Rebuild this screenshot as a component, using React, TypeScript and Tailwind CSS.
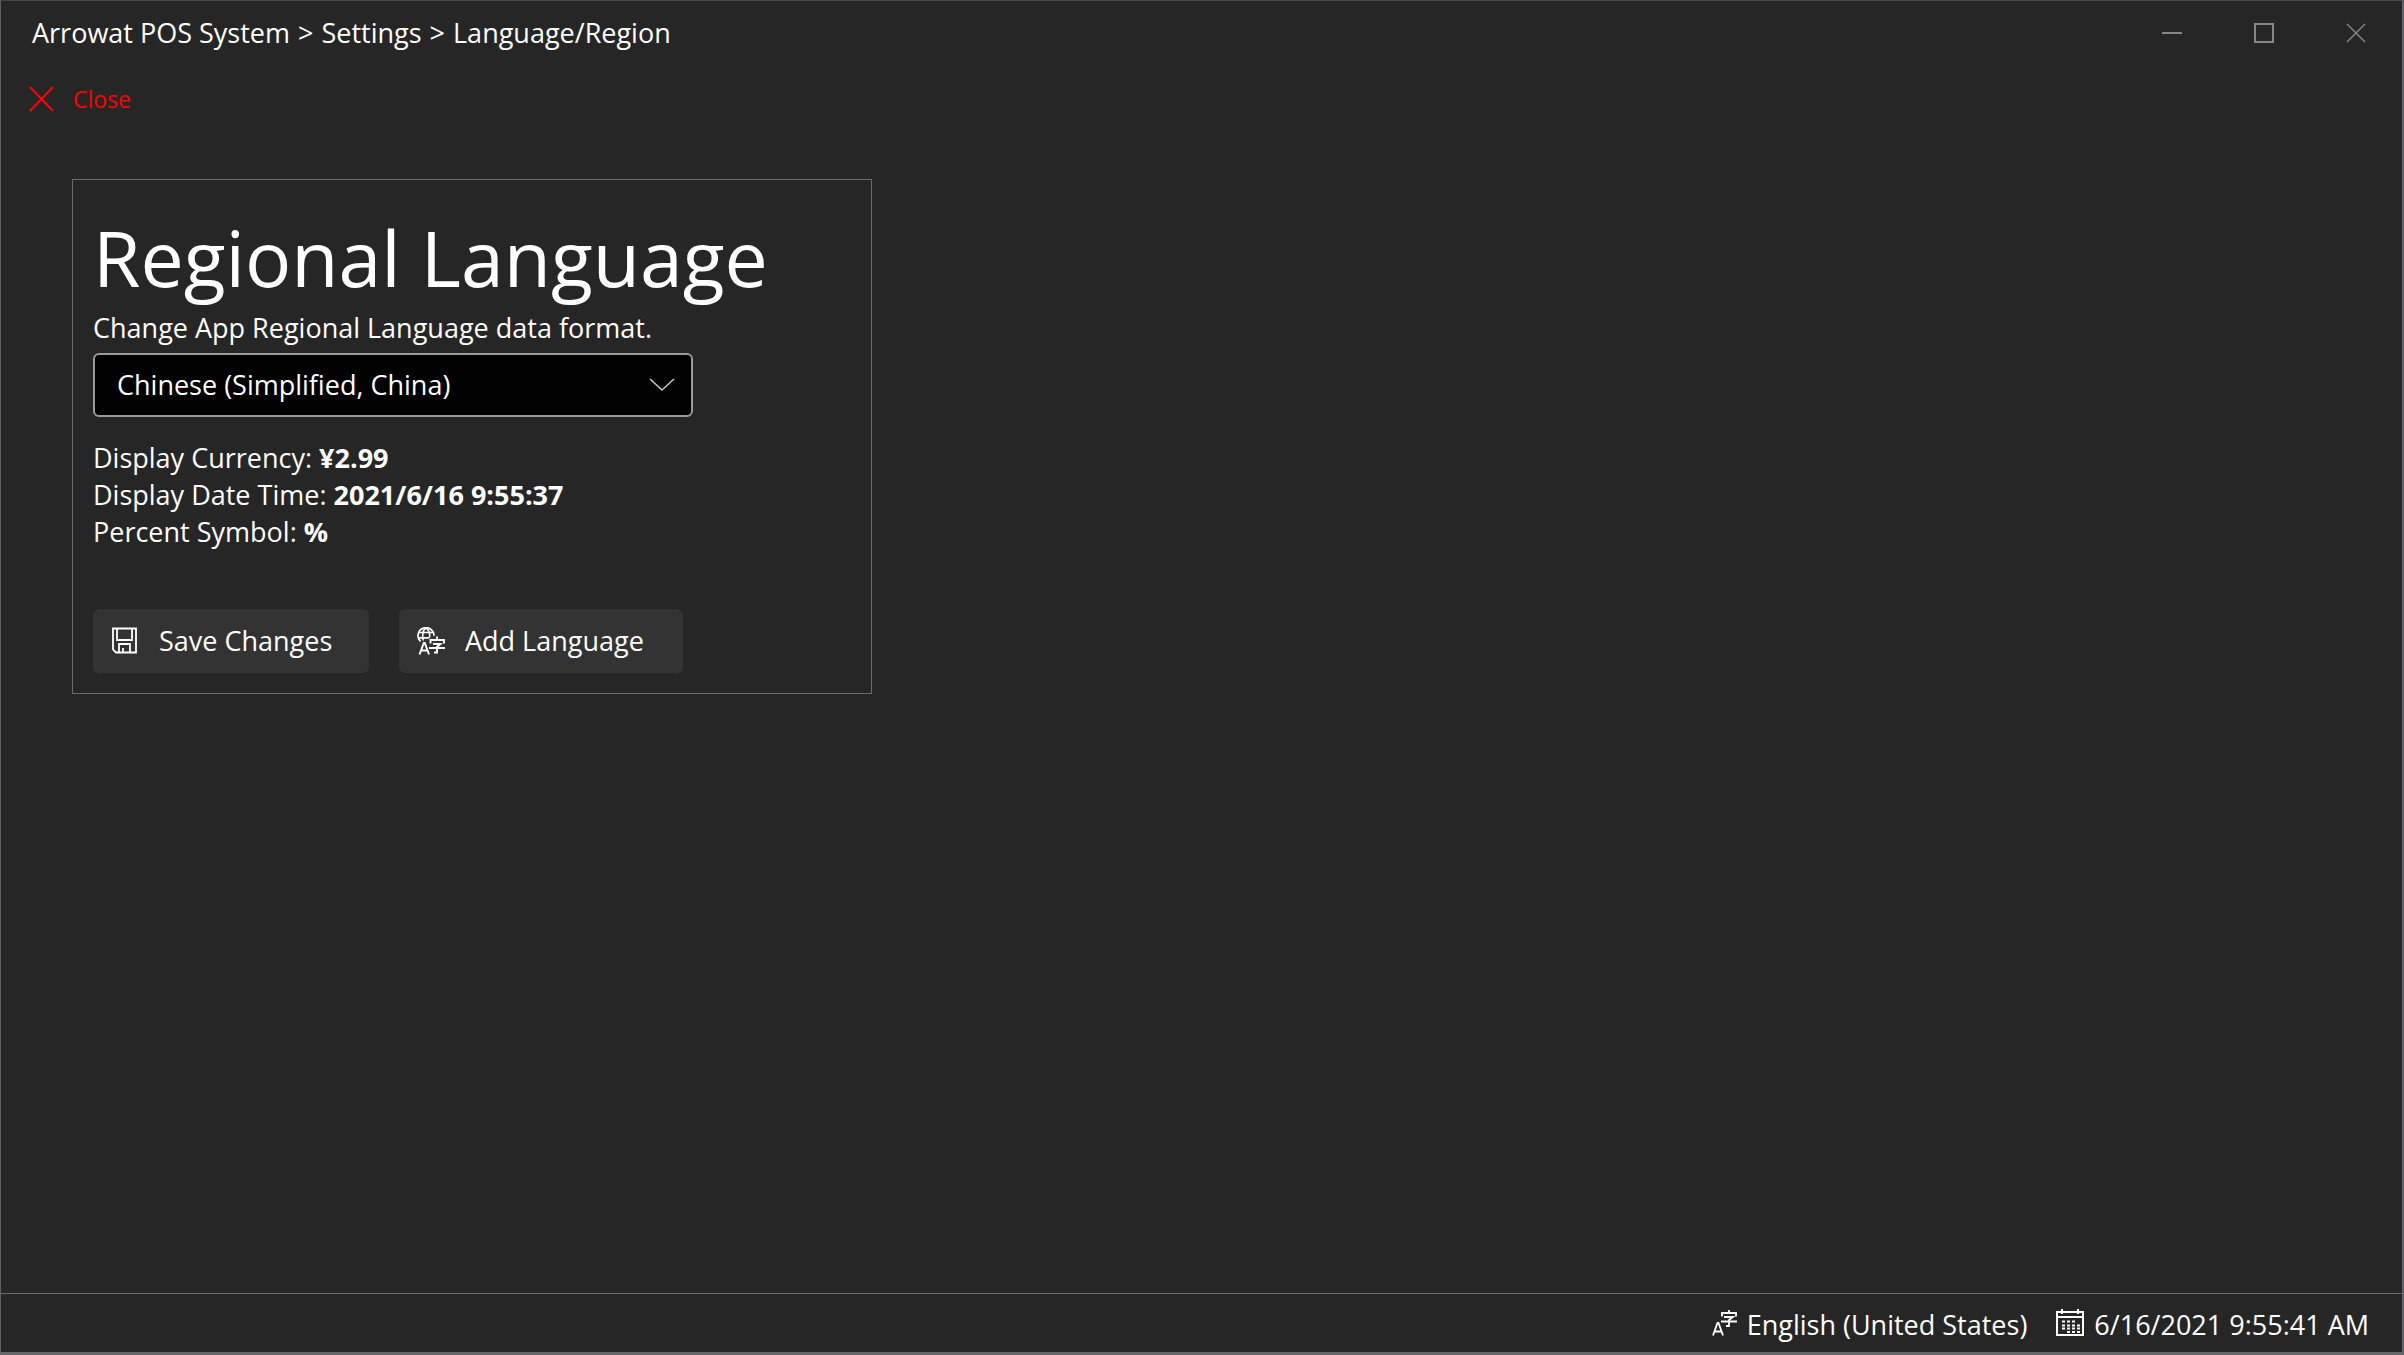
import type { ReactNode } from "react";

function Icon({ size, label, className, children }: { size: number; label?: string; className?: string; children: ReactNode }) {
  return (
    <svg
      width={size}
      height={size}
      viewBox={`0 0 ${size} ${size}`}
      fill="none"
      stroke="currentColor"
      strokeWidth={2}
      aria-hidden={label ? undefined : true}
      aria-label={label}
      className={`shrink-0 ${className ?? ""}`}
    >
      {children}
    </svg>
  );
}

function SaveIcon() {
  return (
    <Icon size={28}>
      <path d="M2 1.500h23v24H5l-3-3V1.500z" strokeWidth={1.800} />
      <path d="M6 2v11h15V2M8 25v-8h11v8M12 25v-4" strokeWidth={1.800} />
    </Icon>
  );
}

function AddLanguageIcon() {
  return (
    <Icon size={28}>
      <path d="M3.500 14.500A8 8 0 1 1 17 8.700M2 5.500h14M1.500 10.800h11" strokeWidth={1.700} />
      <path d="M6.300 13.500C5 9 5.500 3 9 1C12 3 13 7 12.600 10.500" strokeWidth={1.600} />
      <path d="M2.500 27.500L6.800 16h1L12 27.500M4 23.500h6.500" />
      <path d="M20 9.500v3.500M13.500 16.500v-3.500h13.500v3.500M16 17h7.500l-3.500 3v5.500h-3M12 21h16" strokeWidth={1.900} />
    </Icon>
  );
}

function LanguageIcon() {
  return (
    <Icon size={28}>
      <path d="M2 26.500L6.500 14h1L12 26.500M3.500 22.500h7" strokeWidth={1.800} />
      <path d="M18 1v3M11 7.500V4h14v3.500M13 8h9l-4 3V17h-3M10 12.500h16" strokeWidth={1.800} />
    </Icon>
  );
}

function CalendarIcon() {
  return (
    <Icon size={28}>
      <path d="M1 3h26v23H1zM1 8h26M6 0v5M22 0v5" />
      <path d="M6 12.500h3M11 12.500h3M16 12.500h3M6 16.500h3M11 16.500h3M16 16.500h3M21 16.500h3M6 19.500h3M11 19.500h3M16 19.500h3M21 19.500h3M11 23h3M16 23h3M21 23h3" strokeWidth={1.800} />
    </Icon>
  );
}

function WindowButton({ label, children }: { label: string; children: ReactNode }) {
  return (
    <button type="button" aria-label={label} className="flex w-[92px] items-center justify-center text-[#868686]">
      <Icon size={20}>{children}</Icon>
    </button>
  );
}

function ActionButton({ icon, children, className }: { icon: ReactNode; children: ReactNode; className: string }) {
  return (
    <button type="button" className={`flex h-16 items-center rounded-md bg-[#333333] pl-[18px] ${className}`}>
      {icon}
      <span className="ml-5">{children}</span>
    </button>
  );
}

export default function App() {
  return (
    <div className="flex min-h-screen flex-col border-t border-r-2 border-b-[3px] border-l border-t-[#484848] border-r-[#5f6265] border-b-[#656668] border-l-[#5f6265] bg-[#262626] font-['Open_Sans',sans-serif] text-[27px] leading-[38px] text-white">
      <header className="flex h-16 justify-between pl-[31px]">
        <nav aria-label="Breadcrumb" className="flex items-center gap-2">
          <span>Arrowat POS System</span>
          <span>&gt;</span>
          <span>Settings</span>
          <span>&gt;</span>
          <span>Language/Region</span>
        </nav>
        <div className="flex">
          <WindowButton label="Minimize">
            <path d="M0 10h20" />
          </WindowButton>
          <WindowButton label="Maximize">
            <path d="M1 1h18v18H1z" />
          </WindowButton>
          <WindowButton label="Close window">
            <path d="M1 1l18 18M19 1L1 19" strokeWidth={1.500} />
          </WindowButton>
        </div>
      </header>

      <div className="flex h-[68px] items-center pl-[26px]">
        <button type="button" className="flex items-center gap-[18px] text-[23px] text-[#ff0000]">
          <Icon size={28}>
            <path d="M3 2l23 24M26 2L3 26" />
          </Icon>
          Close
        </button>
      </div>

      <main className="flex-1 px-[71px] pt-[46px]">
        <section className="w-full max-w-[800px] border border-[#6b6b6b] px-5 pt-[27px] pb-5">
          <h1 className="text-[77px] leading-[102px]">Regional Language</h1>
          <label htmlFor="region" className="block">
            Change App Regional Language data format.
          </label>
          <div className="relative mt-1.5 max-w-[600px]">
            <select
              id="region"
              className="h-16 w-full appearance-none rounded-md border-2 border-[#9a9a9a] bg-black pr-16 pl-[22px]"
            >
              <option>Chinese (Simplified, China)</option>
              <option>English (United States)</option>
            </select>
            <Icon size={26} className="pointer-events-none absolute top-[19px] right-[18px] text-[#c4c4c4]">
              <path d="M1 7l12 11L25 7" strokeWidth={1.600} />
            </Icon>
          </div>
          <div className="mt-[22px] leading-[37px]">
            <p>
              Display Currency: <b>¥2.99</b>
            </p>
            <p>
              Display Date Time: <b>2021/6/16 9:55:37</b>
            </p>
            <p>
              Percent Symbol: <b>%</b>
            </p>
          </div>
          <div className="mt-[59px] flex gap-[30px]">
            <ActionButton icon={<SaveIcon />} className="w-[276px]">
              Save Changes
            </ActionButton>
            <ActionButton icon={<AddLanguageIcon />} className="w-[284px]">
              Add Language
            </ActionButton>
          </div>
        </section>
      </main>

      <footer className="flex h-[59px] items-center justify-end gap-[29px] border-t border-[#6b6b6b] pt-1 pr-[33px]">
        <span className="flex items-center gap-2">
          <span className="mb-1">
            <LanguageIcon />
          </span>
          English (United States)
        </span>
        <span className="flex items-center gap-2.5">
          <span className="mb-1">
            <CalendarIcon />
          </span>
          6/16/2021 9:55:41 AM
        </span>
      </footer>
    </div>
  );
}
